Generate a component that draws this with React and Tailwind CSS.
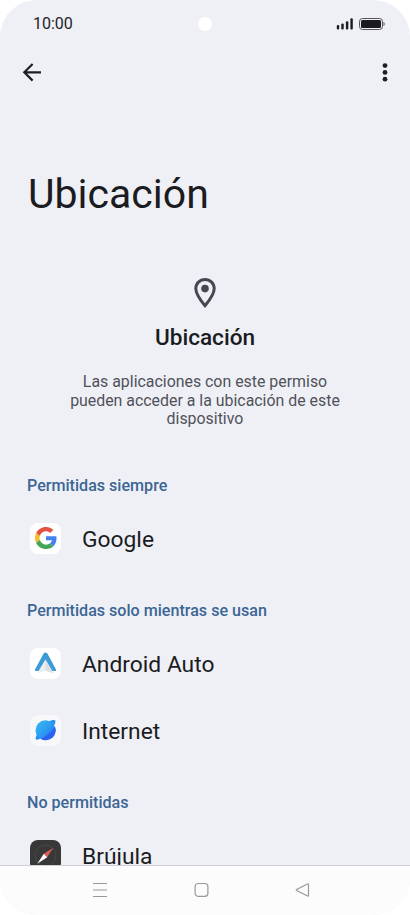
import React from 'react';

const GoogleIcon = () => (
  <svg viewBox="0 0 48 48" className="w-[22px] h-[22px]">
    <path fill="#e25141" d="M24 9.5c3.54 0 6.71 1.22 9.21 3.6l6.85-6.85C35.9 2.38 30.47 0 24 0 14.62 0 6.51 5.38 2.56 13.22l7.98 6.19C12.43 13.72 17.74 9.5 24 9.5z" />
    <path fill="#4680ec" d="M46.98 24.55c0-1.57-.15-3.09-.38-4.55H24v9.02h12.94c-.58 2.96-2.26 5.48-4.78 7.18l7.73 6c4.51-4.18 7.09-10.36 7.09-17.65z" />
    <path fill="#f4bd2c" d="M10.53 28.59c-.48-1.45-.76-2.99-.76-4.59s.27-3.14.76-4.59l-7.98-6.19C.92 16.46 0 20.12 0 24c0 3.88.92 7.54 2.56 10.78l7.97-6.19z" />
    <path fill="#44a457" d="M24 48c6.48 0 11.93-2.13 15.89-5.81l-7.73-6c-2.15 1.45-4.92 2.3-8.16 2.3-6.26 0-11.57-4.22-13.47-9.91l-7.98 6.19C6.51 42.62 14.62 48 24 48z" />
  </svg>
);

const AutoIcon = () => (
  <svg viewBox="0 0 31 31" className="w-full h-full">
    <path d="M15.5 12 23.500 25.200l-8-2.700-8 2.700z" fill="#ebedef" />
    <path d="M15.5 12V22.500l8 2.700z" fill="#dcdfe2" />
    <path d="M13.6 5.600q1.900-2.400 3.800 0l8.600 15.900q.5 1.500-1 1.500h-2.600L15.500 11.500 8.600 23H6q-1.500 0-1-1.500z" fill="#3c9bd6" />
  </svg>
);

const InternetIcon = () => (
  <svg viewBox="0 0 31 31" className="w-full h-full">
    <defs>
      <linearGradient id="planet" x1="0" y1="0" x2="1" y2="1">
        <stop offset="0" stopColor="#35bdf2" />
        <stop offset="0.5" stopColor="#2c9cf2" />
        <stop offset="1" stopColor="#2c5df0" />
      </linearGradient>
    </defs>
    <path d="M19 6.300c3.500-1.500 5.800-1.700 6.300-.8.400.8 0 2.500-.9 4.500L10 23.800c-2.200 1-3.800 1.200-4.200.5-.4-.8 0-2.500.900-4.500z" fill="#2b8ff0" />
    <circle cx="15.500" cy="15.200" r="10" fill="url(#planet)" />
    <path d="M25 11.500c-3.500 5-8.500 9.500-14 12.500q2 1.200 4.500 1.200a10 10 0 0 0 9.500-13.700z" fill="#2c62f2" />
  </svg>
);

const CompassIcon = () => (
  <svg viewBox="0 0 31 31" className="w-full h-full">
    <circle cx="15.500" cy="15.500" r="10.500" fill="none" stroke="#484848" strokeWidth="1" />
    <path d="M23.300 7.700 17.200 17.200l-3.400-3.400z" fill="#dc5c58" />
    <path d="M7.300 23.700 13.800 13.800l3.400 3.400z" fill="#fff" />
  </svg>
);

const secciones = [
  {
    titulo: 'Permitidas siempre',
    apps: [{ nombre: 'Google', icono: <GoogleIcon />, fondo: 'bg-white' }],
  },
  {
    titulo: 'Permitidas solo mientras se usan',
    apps: [
      { nombre: 'Android Auto', icono: <AutoIcon />, fondo: 'bg-white' },
      { nombre: 'Internet', icono: <InternetIcon />, fondo: 'bg-[#f8f8fa]' },
    ],
  },
  {
    titulo: 'No permitidas',
    apps: [{ nombre: 'Brújula', icono: <CompassIcon />, fondo: 'bg-[#383838]' }],
  },
];

function StatusBar() {
  return (
    <div className="h-12 shrink-0 grid grid-cols-3 items-center pl-[33px] pr-[25px]">
      <span className="text-[16px] leading-none text-[#222326]">10:00</span>
      <div className="w-[14px] h-[14px] rounded-full bg-white justify-self-center -translate-x-1" />
      <svg viewBox="0 0 50 14" className="w-[50px] h-[14px] justify-self-end" fill="#1b1b1d">
        <rect x="1.800" y="8" width="2.400" height="4.500" rx="1" />
        <rect x="6.300" y="6.500" width="2.400" height="6" rx="1" />
        <rect x="10.900" y="4.200" width="2.400" height="8.300" rx="1" />
        <rect x="15.400" y="1.200" width="2.400" height="11.300" rx="1" />
        <rect x="24.500" y="1.500" width="23" height="11" rx="3" fill="none" stroke="#555558" />
        <rect x="26" y="3" width="20" height="8" rx="1.500" />
        <path d="M48.400 5q1.500 0 1.500 2t-1.500 2z" fill="#777" />
      </svg>
    </div>
  );
}

function NavBar() {
  return (
    <div className="h-[50px] shrink-0 bg-[#fcfcfc] border-t border-[#cfd0d5] flex items-center pb-[2px] pl-[92px] gap-[86px]">
      <svg viewBox="0 0 16 16" className="w-4 h-4" stroke="#999" strokeWidth="1.100">
        <path d="M1 1.500h14M1 8h14M1 14.500h14" />
      </svg>
      <svg viewBox="0 0 16 16" className="w-4 h-4" fill="none" stroke="#999" strokeWidth="1.200">
        <rect x="1.100" y="1.500" width="12.800" height="12.800" rx="3" />
      </svg>
      <svg viewBox="0 0 16 16" className="w-4 h-4 -ml-[2px]" fill="none" stroke="#999" strokeWidth="1.200" strokeLinejoin="round">
        <path d="M14.500 2.600q0-1-1-.6L2.600 7.500q-.8.500 0 1l10.900 5.500q1 .4 1-.6z" />
      </svg>
    </div>
  );
}

export default function App() {
  return (
    <div className="w-[410px] h-[915px] bg-white font-['Roboto',sans-serif]">
      <div className="w-full h-full rounded-[37px] overflow-hidden bg-[#eff0f6] flex flex-col text-[#1b1c21]">
        <StatusBar />

        <div className="h-12 shrink-0 flex items-center justify-between pl-5 pr-[13px]">
          <svg viewBox="0 0 24 24" className="w-6 h-6" fill="none" stroke="#1e1f22" strokeWidth="2.200">
            <path d="M21 12.300H4.500M12.600 4 4.300 12.300l8.300 8.300" />
          </svg>
          <svg viewBox="0 0 24 24" className="w-6 h-6" fill="#1e1f22">
            <circle cx="12" cy="5.600" r="2.400" />
            <circle cx="12" cy="12.400" r="2.400" />
            <circle cx="12" cy="19.200" r="2.400" />
          </svg>
        </div>

        <div className="flex-1 min-h-0 overflow-hidden px-[27px]">
          <h1 className="mt-[74px] pl-px text-[41px] leading-[48px]">Ubicación</h1>

          <div className="mt-[59px] flex flex-col items-center text-center">
            <svg viewBox="0 0 24 32" className="w-6 h-8">
              <path d="M12 2.500c-5.200 0-9.200 4-9.200 9.100C2.800 18 12 28.700 12 28.700S21.200 18 21.200 11.600c0-5.100-4-9.100-9.200-9.100z" fill="none" stroke="#454850" strokeWidth="3" />
              <circle cx="12" cy="11.600" r="3.800" fill="#454850" />
            </svg>
            <h2 className="mt-[15px] text-[22.600px] leading-[28px] font-medium">Ubicación</h2>
            <p className="mt-[21px] w-[280px] text-[15.900px] leading-[18.700px] text-[#50525a]">
              Las aplicaciones con este permiso pueden acceder a la ubicación de este dispositivo
            </p>
          </div>

          <div className="mt-[37px]">
            {secciones.map(seccion => (
              <div key={seccion.titulo} className="mb-[18px]">
                <h3 className="h-10 flex items-center text-[16.100px] font-medium text-[#3c6694]">{seccion.titulo}</h3>
                {seccion.apps.map(app => (
                  <div key={app.nombre} className="h-[67px] flex items-center pl-[3px]">
                    <div className={`w-[31px] h-[31px] mb-[3px] rounded-[8px] flex items-center justify-center ${app.fondo}`}>
                      {app.icono}
                    </div>
                    <span className="ml-[21px] text-[22.800px] leading-[28px]">{app.nombre}</span>
                  </div>
                ))}
              </div>
            ))}
          </div>
        </div>

        <NavBar />
      </div>
    </div>
  );
}
